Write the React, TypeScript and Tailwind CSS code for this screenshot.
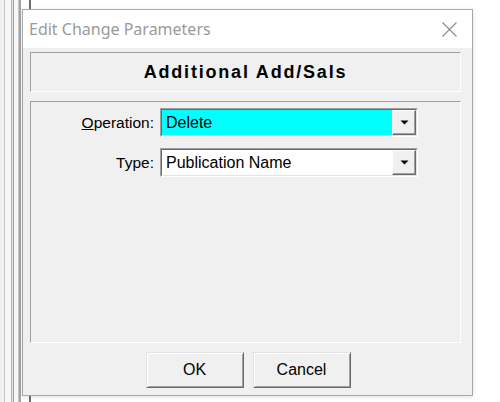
import React from "react";

const strips: { w: string; c: string }[] = [
  { w: "w-[4px]", c: "bg-[#f0f0f0]" },
  { w: "w-[1px]", c: "bg-[#c4c4c4]" },
  { w: "w-[6px]", c: "bg-[#f7f7f7]" },
  { w: "w-[1px]", c: "bg-[#b0b0b0]" },
  { w: "w-[1px]", c: "bg-[#e5e5e5]" },
  { w: "w-[1px]", c: "bg-[#a0a0a0]" },
  { w: "w-[4px]", c: "bg-[#f7f7f7]" },
  { w: "w-[1px]", c: "bg-[#c8c8c8]" },
  { w: "w-[2px]", c: "bg-[#a4a4a4]" },
  { w: "w-[8px]", c: "bg-white" },
  { w: "w-[2px]", c: "bg-[#6d6d6d]" },
];

function Arrow() {
  return (
    <svg width="9" height="5" viewBox="0 0 9 5">
      <path d="M0.5 0.5H8.5L4.5 4.5Z" fill="#000" />
    </svg>
  );
}

function Combo({ value, fill }: { value: string; fill: string }) {
  return (
    <div className="h-[29px] flex border border-t-[#a0a0a0] border-l-[#a0a0a0] border-b-white border-r-white">
      <div className={`flex-1 flex border border-t-[#696969] border-l-[#696969] border-b-[#e3e3e3] border-r-[#e3e3e3] ${fill}`}>
        <span className="flex-1 self-center pl-[4px] text-[16px] leading-none text-black">{value}</span>
        <div className="w-[24px] bg-[#f0f0f0] flex items-center justify-center border border-t-white border-l-white border-b-[#696969] border-r-[#696969] shadow-[inset_-1px_-1px_0_#a0a0a0]">
          <Arrow />
        </div>
      </div>
    </div>
  );
}

function Btn({ label }: { label: string }) {
  return (
    <div className="w-[98px] h-[36px] bg-[#f0f0f0] flex items-center justify-center border border-t-[#e3e3e3] border-l-[#e3e3e3] border-b-[#696969] border-r-[#696969] shadow-[inset_1px_1px_0_#fff,inset_-1px_-1px_0_#a0a0a0] text-[16px] text-black">
      {label}
    </div>
  );
}

export default function App() {
  return (
    <div className="relative w-[500px] h-[402px] overflow-hidden bg-white flex font-['Liberation_Sans',Arial,sans-serif]">
      {strips.map((s, i) => (
        <div key={i} className={`${s.w} ${s.c} h-full shrink-0`} />
      ))}

      <div className="absolute left-[22px] top-[9px] w-[451px] h-[387px] border border-[#a8a8a8] bg-[#f0f0f0] flex flex-col shadow-[0_1px_4px_rgba(0,0,0,0.12)]">
        <div className="h-[38px] shrink-0 bg-white flex items-center justify-between">
          <span className="pl-[6px] text-[16px] text-[#9a9a9a] font-['Noto_Sans',sans-serif] leading-none">
            Edit Change Parameters
          </span>
          <div className="w-[46px] h-full flex items-center justify-center">
            <svg width="15" height="15" viewBox="0 0 15 15">
              <path d="M0.5 0.5L14.5 14.5M14.5 0.5L0.5 14.5" stroke="#8c8c8c" strokeWidth="1.1" />
            </svg>
          </div>
        </div>

        <div className="flex-1 flex flex-col pt-[4px] pl-[7px] pr-[11px]">
          <div className="h-[40px] shrink-0 flex items-center justify-center border border-t-[#a0a0a0] border-l-[#a0a0a0] border-b-white border-r-white">
            <span className="text-[18px] font-bold tracking-[1.8px] text-black leading-none">Additional Add/Sals</span>
          </div>

          <div className="mt-[9px] h-[242px] shrink-0 border border-t-[#a0a0a0] border-l-[#a0a0a0] border-b-white border-r-white pt-[6px]">
            <div className="grid grid-cols-[123px_258px] gap-x-[6px] gap-y-[11px] items-center">
              <div className="text-right text-[15.5px] text-black leading-none">
                <u>O</u>peration:
              </div>
              <Combo value="Delete" fill="bg-[#00ffff]" />
              <div className="text-right text-[15.5px] text-black leading-none">Type:</div>
              <Combo value="Publication Name" fill="bg-white" />
            </div>
          </div>

          <div className="mt-[9px] flex justify-center gap-[9px] pl-[5px]">
            <Btn label="OK" />
            <Btn label="Cancel" />
          </div>
        </div>
      </div>
    </div>
  );
}
